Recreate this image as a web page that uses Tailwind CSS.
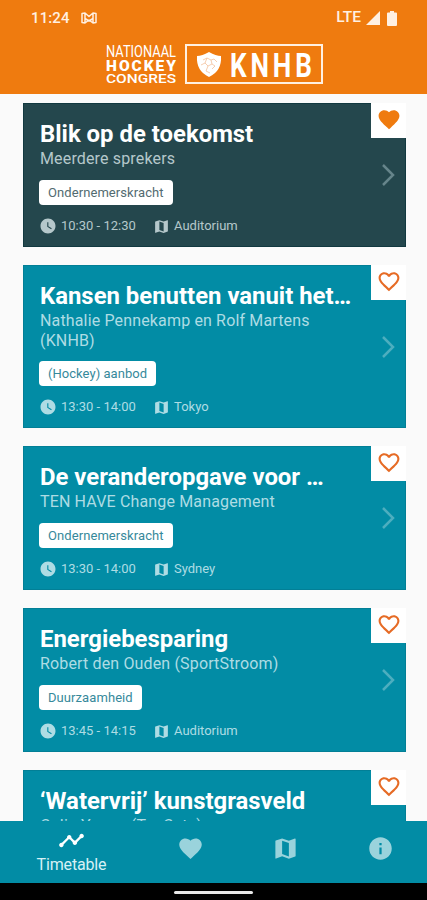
<!DOCTYPE html>
<html lang="nl">
<head>
  <meta charset="UTF-8">
  <meta name="viewport" content="width=device-width, initial-scale=1.0">
  <title>Nationaal Hockey Congres</title>
  <script src="https://cdn.jsdelivr.net/npm/@tailwindcss/browser@4"></script>
</head>
<body class="bg-[#fafafa] font-['Roboto',sans-serif]">
  <!-- Icons -->
  <svg class="hidden">
    <symbol id="heart" viewBox="0 0 24 24"><path d="M12 21.35l-1.45-1.32C5.4 15.36 2 12.28 2 8.5 2 5.42 4.42 3 7.5 3c1.74 0 3.41.81 4.5 2.09C13.09 3.81 14.76 3 16.5 3 19.58 3 22 5.42 22 8.5c0 3.78-3.4 6.86-8.55 11.54L12 21.35z"/></symbol>
    <symbol id="heart-outline" viewBox="0 0 24 24"><path d="M16.5 3c-1.74 0-3.41.81-4.5 2.09C10.91 3.81 9.24 3 7.5 3 4.42 3 2 5.42 2 8.5c0 3.78 3.4 6.86 8.55 11.54L12 21.35l1.45-1.32C18.6 15.36 22 12.28 22 8.5 22 5.42 19.58 3 16.5 3zm-4.4 15.55l-.1.1-.1-.1C7.14 14.24 4 11.39 4 8.5 4 6.5 5.5 5 7.5 5c1.54 0 3.04.99 3.57 2.36h1.87C13.46 5.99 14.96 5 16.5 5c2 0 3.5 1.5 3.5 3.5 0 2.89-3.14 5.74-7.9 10.05z"/></symbol>
    <symbol id="clock" viewBox="0 0 24 24"><path d="M12 2C6.500 2 2 6.500 2 12s4.500 10 10 10 10-4.500 10-10S17.500 2 12 2zm4.200 14.200L11 13V7h1.500v5.200l4.500 2.700-.8 1.300z"/></symbol>
    <symbol id="map" viewBox="0 0 24 24"><path d="M20.500 3l-.16.03L15 5.100 9 3 3.360 4.900c-.21.070-.36.250-.36.480V20.500c0 .28.220.5.5.5l.16-.03L9 18.900l6 2.100 5.640-1.900c.21-.07.36-.25.36-.48V3.500c0-.28-.22-.5-.5-.5zM15 19l-6-2.110V5l6 2.110V19z"/></symbol>
    <symbol id="chevron" viewBox="0 0 14 24"><path d="M2 2l10 10L2 22" fill="none" stroke="currentColor" stroke-width="2.500"/></symbol>
  </svg>

  <div class="flex flex-col w-[427px] h-[900px] overflow-hidden">
    <!-- Header -->
    <header class="h-[94px] shrink-0 bg-[#ef7b0f] text-white">
      <div class="h-9 pl-[31px] pr-[29px] flex items-center text-[#fff0e2]">
        <span class="text-[15px] font-medium tracking-[0.1px]">11:24</span>
        <svg class="ml-[11px] w-4 h-3" viewBox="0 0 16 12" fill="none" stroke="currentColor" stroke-width="1.500" stroke-linejoin="round"><path d="M1 1.500l3-.5 4 3.500L12 1l3 .5v9l-3 .5V6.500L8 9 4 6.500V11l-3-.5zM4 1v5.500M12 1v5.500M4 11l4-3 4 3"/></svg>
        <span class="ml-auto text-[15.500px] font-medium">LTE</span>
        <svg class="ml-[5px] w-[14px] h-[14px]" viewBox="0 0 14 14" fill="currentColor"><path d="M14 0v14H0z"/></svg>
        <svg class="ml-[7px] mr-[1px] w-[10px] h-[15px]" viewBox="0 0 10 15" fill="currentColor"><path d="M3 0h4v1.500h2a1 1 0 0 1 1 1V14a1 1 0 0 1-1 1H1a1 1 0 0 1-1-1V2.500a1 1 0 0 1 1-1h2z"/></svg>
      </div>
      <div class="flex pl-[106px] pt-2">
        <svg class="w-[71px] h-10 overflow-visible" viewBox="0 0 71 40" fill="white" font-family="Roboto, sans-serif">
          <text x="0" y="12.500" font-size="16.500" textLength="70" lengthAdjust="spacingAndGlyphs">NATIONAAL</text>
          <text x="0" y="26.500" font-size="15.500" font-weight="900" textLength="70" lengthAdjust="spacing">HOCKEY</text>
          <text x="0" y="39" font-size="13.500" font-weight="500" textLength="70" lengthAdjust="spacingAndGlyphs">CONGRES</text>
        </svg>
        <div class="ml-2 w-[138px] h-10 border-2 border-[#fff0e2] flex items-center">
          <svg class="ml-[9px] w-[26px] h-[27px]" viewBox="0 0 26 27"><path d="M1 5Q6 5 13 1q7 4 12 4 1 15-12 21Q0 20 1 5z" fill="white"/><path d="M7 9l4-2 4 2 3-1 3 3M5 14l4-2 3 3 4-2 3 2M9 12l2-5M12 15l-2 5 4 2M16 13l-1-4M16 18l3-3" fill="none" stroke="#f3c09c" stroke-width=".8"/></svg>
          <svg class="ml-2 w-[84px] h-[27px] overflow-visible" viewBox="0 0 84 27" fill="white" font-family="Roboto, sans-serif"><text transform="translate(0 25.500) scale(.78 1)" font-size="33.500" font-weight="700" letter-spacing="5">KNHB</text></svg>
        </div>
      </div>
    </header>

    <!-- Timetable -->
    <main class="flex-1 min-h-0 overflow-hidden pt-[9px] pl-[23px] pr-[21px] flex flex-col gap-[18px]">
      <article class="relative h-[144px] shrink-0 bg-[#24474d] border border-[#123940] pt-4 pl-4 text-[#b5c8cb]">
        <h2 class="text-[23.900px] leading-7 font-bold text-white whitespace-nowrap">Blik op de toekomst</h2>
        <p class="w-[290px] pt-px text-base leading-5 tracking-[0.15px]">Meerdere sprekers</p>
        <span class="mt-[11px] -ml-px flex w-fit items-center h-[25px] px-[9px] rounded bg-white text-[13px] tracking-[0.08px] text-[#526b70]">Ondernemerskracht</span>
        <div class="mt-3 -ml-px flex items-center h-[18px] text-[13px]">
          <svg class="w-[18px] h-[18px] mr-1" fill="currentColor"><use href="#clock"/></svg><span class="w-[92px]">10:30 - 12:30</span>
          <svg class="w-[17px] h-[17px] mr-1" fill="currentColor"><use href="#map"/></svg><span>Auditorium</span>
        </div>
        <svg class="absolute right-[10px] top-[59px] w-[14px] h-6 text-[#66858b]"><use href="#chevron"/></svg>
        <div class="absolute -top-px -right-px w-[35px] h-[35px] pb-[2px] bg-white flex items-center justify-center"><svg class="w-[26px] h-[25px]" fill="#ef7b0f"><use href="#heart"/></svg></div>
      </article>

      <article class="relative h-[163px] shrink-0 bg-[#028ca5] border border-[#027f96] pt-4 pl-4 text-[#aedce4]">
        <h2 class="text-[23.900px] leading-7 font-bold text-white whitespace-nowrap">Kansen benutten vanuit het…</h2>
        <p class="w-[290px] pt-px text-base leading-[19.500px] tracking-[0.15px]">Nathalie Pennekamp en Rolf Martens (KNHB)</p>
        <span class="mt-[11px] -ml-px flex w-fit items-center h-[25px] px-[9px] rounded bg-white text-[13px] tracking-[0.04px] text-[#36899b]">(Hockey) aanbod</span>
        <div class="mt-3 -ml-px flex items-center h-[18px] text-[13px]">
          <svg class="w-[18px] h-[18px] mr-1" fill="currentColor"><use href="#clock"/></svg><span class="w-[92px]">13:30 - 14:00</span>
          <svg class="w-[17px] h-[17px] mr-1" fill="currentColor"><use href="#map"/></svg><span>Tokyo</span>
        </div>
        <svg class="absolute right-[10px] top-[69px] w-[14px] h-6 text-[#4daebf]"><use href="#chevron"/></svg>
        <div class="absolute -top-px -right-px w-[35px] h-[35px] pb-[2px] bg-white flex items-center justify-center"><svg class="w-[26px] h-[25px]" fill="#e66b25"><use href="#heart-outline"/></svg></div>
      </article>

      <article class="relative h-[144px] shrink-0 bg-[#028ca5] border border-[#027f96] pt-4 pl-4 text-[#aedce4]">
        <h2 class="text-[23.900px] leading-7 font-bold text-white whitespace-nowrap">De veranderopgave voor …</h2>
        <p class="w-[290px] pt-px text-base leading-5 tracking-[0.15px]">TEN HAVE Change Management</p>
        <span class="mt-[11px] -ml-px flex w-fit items-center h-[25px] px-[9px] rounded bg-white text-[13px] tracking-[0.08px] text-[#36899b]">Ondernemerskracht</span>
        <div class="mt-3 -ml-px flex items-center h-[18px] text-[13px]">
          <svg class="w-[18px] h-[18px] mr-1" fill="currentColor"><use href="#clock"/></svg><span class="w-[92px]">13:30 - 14:00</span>
          <svg class="w-[17px] h-[17px] mr-1" fill="currentColor"><use href="#map"/></svg><span>Sydney</span>
        </div>
        <svg class="absolute right-[10px] top-[59px] w-[14px] h-6 text-[#4daebf]"><use href="#chevron"/></svg>
        <div class="absolute -top-px -right-px w-[35px] h-[35px] pb-[2px] bg-white flex items-center justify-center"><svg class="w-[26px] h-[25px]" fill="#e66b25"><use href="#heart-outline"/></svg></div>
      </article>

      <article class="relative h-[144px] shrink-0 bg-[#028ca5] border border-[#027f96] pt-4 pl-4 text-[#aedce4]">
        <h2 class="text-[23.900px] leading-7 font-bold text-white whitespace-nowrap">Energiebesparing</h2>
        <p class="w-[290px] pt-px text-base leading-5 tracking-[0.15px]">Robert den Ouden (SportStroom)</p>
        <span class="mt-[11px] -ml-px flex w-fit items-center h-[25px] px-[9px] rounded bg-white text-[13px] tracking-[0.08px] text-[#36899b]">Duurzaamheid</span>
        <div class="mt-3 -ml-px flex items-center h-[18px] text-[13px]">
          <svg class="w-[18px] h-[18px] mr-1" fill="currentColor"><use href="#clock"/></svg><span class="w-[92px]">13:45 - 14:15</span>
          <svg class="w-[17px] h-[17px] mr-1" fill="currentColor"><use href="#map"/></svg><span>Auditorium</span>
        </div>
        <svg class="absolute right-[10px] top-[59px] w-[14px] h-6 text-[#4daebf]"><use href="#chevron"/></svg>
        <div class="absolute -top-px -right-px w-[35px] h-[35px] pb-[2px] bg-white flex items-center justify-center"><svg class="w-[26px] h-[25px]" fill="#e66b25"><use href="#heart-outline"/></svg></div>
      </article>

      <article class="relative h-[144px] shrink-0 bg-[#028ca5] border border-[#027f96] pt-4 pl-4 text-[#aedce4]">
        <h2 class="text-[23.900px] leading-7 font-bold text-white whitespace-nowrap">‘Watervrij’ kunstgrasveld</h2>
        <p class="w-[290px] pt-px text-base leading-5 tracking-[0.15px]">Colin Young (TenCate)</p>
        <div class="absolute -top-px -right-px w-[35px] h-[35px] pb-[2px] bg-white flex items-center justify-center"><svg class="w-[26px] h-[25px]" fill="#e66b25"><use href="#heart-outline"/></svg></div>
      </article>
    </main>

    <!-- Bottom navigation -->
    <nav class="h-[62px] shrink-0 bg-[#028ca5] grid grid-cols-[143px_95px_95px_94px] text-[#9ad3dc]">
      <a class="flex flex-col items-center pt-[6px] text-white">
        <svg class="w-[27px] h-[27px]" viewBox="0 0 24 24" fill="currentColor"><path d="M23 8c0 1.100-.9 2-2 2-.18 0-.35-.02-.51-.07l-3.560 3.550c.05.16.07.34.07.52 0 1.100-.9 2-2 2s-2-.9-2-2c0-.18.02-.36.07-.52l-2.550-2.550c-.16.05-.34.07-.52.07s-.36-.02-.52-.07l-4.550 4.560c.05.16.07.33.07.51 0 1.100-.9 2-2 2s-2-.9-2-2 .9-2 2-2c.18 0 .35.02.51.07l4.560-4.550C8.020 9.360 8 9.180 8 9c0-1.100.9-2 2-2s2 .9 2 2c0 .18-.02.36-.07.52l2.550 2.550c.16-.05.34-.07.52-.07s.36.02.52.07l3.550-3.560C19.020 8.350 19 8.180 19 8c0-1.100.9-2 2-2s2 .9 2 2z"/></svg>
        <span class="mt-px text-base leading-5 tracking-[-0.15px] text-[#d6f1f5]">Timetable</span>
      </a>
      <a class="flex justify-center pt-[14px]"><svg class="w-[27px] h-[27px]" fill="currentColor"><use href="#heart"/></svg></a>
      <a class="flex justify-center pt-[14px]"><svg class="w-[27px] h-[27px]" fill="currentColor"><use href="#map"/></svg></a>
      <a class="flex justify-center pt-[14px]"><svg class="w-[27px] h-[27px]" viewBox="0 0 24 24" fill="currentColor"><path d="M12 2C6.480 2 2 6.480 2 12s4.480 10 10 10 10-4.480 10-10S17.520 2 12 2zm1 15h-2v-6h2v6zm0-8h-2V7h2v2z"/></svg></a>
    </nav>
    <div class="h-[17px] shrink-0 bg-black flex justify-center pt-2">
      <div class="w-[79px] h-[3px] rounded-full bg-[#e8e8e8]"></div>
    </div>
  </div>
</body>
</html>
